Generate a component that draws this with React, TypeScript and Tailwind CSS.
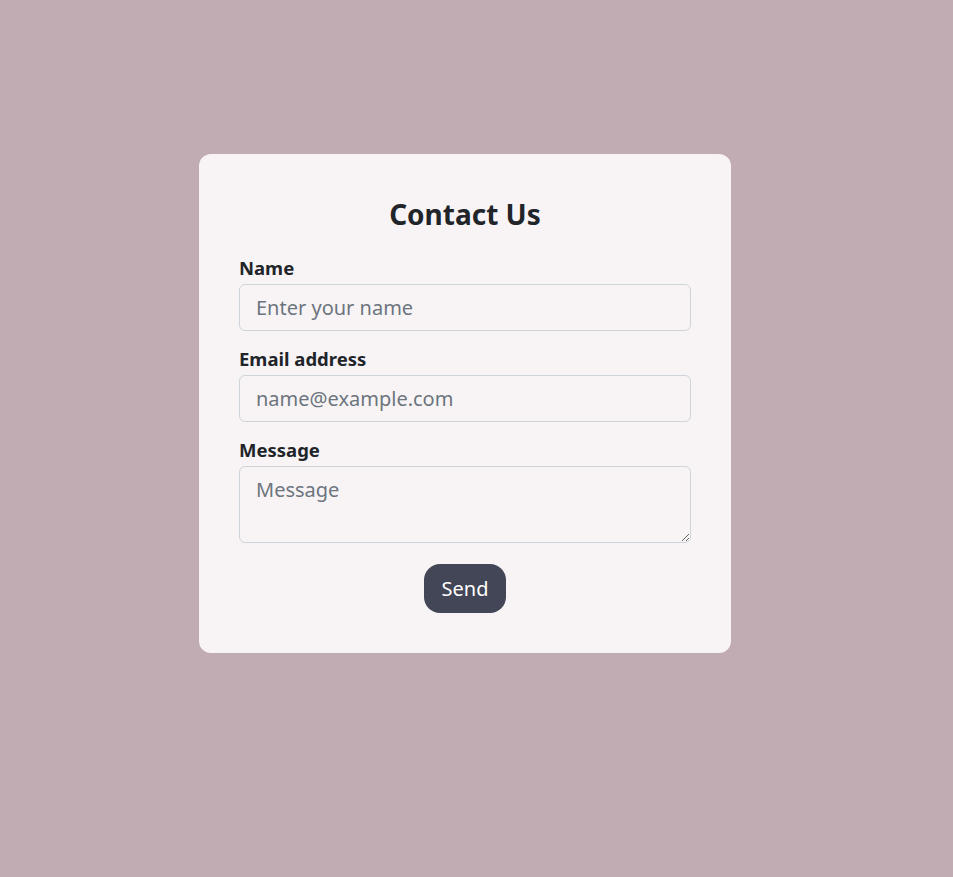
export default function App() {
  return (
    <div className="min-h-screen w-full bg-[#c1acb4] pt-[154px] font-['Noto_Sans',_sans-serif] text-[#212529]">
      <form
        className="ml-[199px] w-[532px] rounded-xl bg-[#f8f4f6] p-10"
        onSubmit={e => e.preventDefault()}
      >
        <h3 className="mb-[20px] text-center text-[28px] font-bold leading-[40px]">Contact Us</h3>

        <div className="mb-[14px]">
          <label className="mb-[3px] block text-[18.5px] font-bold leading-[27px]">Name</label>
          <input
            type="text"
            placeholder="Enter your name"
            className="block h-[47px] w-full rounded-md border border-[#ced4da] bg-transparent px-4 text-[20px] outline-none placeholder:text-[#6c757d]"
          />
        </div>

        <div className="mb-[14px]">
          <label className="mb-[3px] block text-[18.5px] font-bold leading-[27px]">Email address</label>
          <input
            type="email"
            placeholder="name@example.com"
            className="block h-[47px] w-full rounded-md border border-[#ced4da] bg-transparent px-4 text-[20px] outline-none placeholder:text-[#6c757d]"
          />
        </div>

        <div className="mb-[21px]">
          <label className="mb-[3px] block text-[18.5px] font-bold leading-[27px]">Message</label>
          <textarea
            placeholder="Message"
            className="block h-[77px] w-full rounded-md border border-[#ced4da] bg-transparent px-4 py-2 text-[20px] leading-[30px] outline-none placeholder:text-[#6c757d]"
          />
        </div>

        <div className="flex justify-center">
          <button
            type="submit"
            className="h-[49px] rounded-2xl bg-[#434656] px-[18px] text-[20px] text-white"
          >
            Send
          </button>
        </div>
      </form>
    </div>
  )
}
